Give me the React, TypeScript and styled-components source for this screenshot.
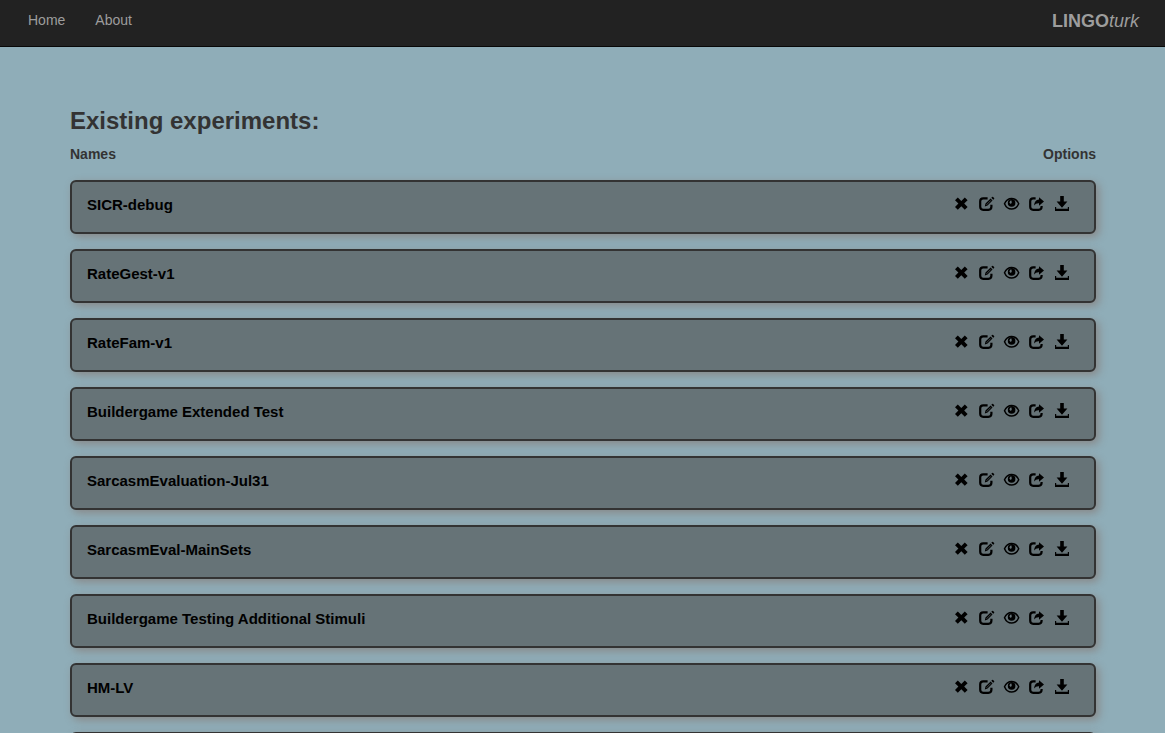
import React from "react";
import styled, { createGlobalStyle } from "styled-components";

const GlobalStyle = createGlobalStyle`
  * { box-sizing: border-box; }
  body {
    margin: 0;
    background: #8fadb8;
    color: #333;
    font-family: "Liberation Sans", Arial, sans-serif;
    font-size: 14px;
    line-height: 20px;
  }
`;

const Navbar = styled.nav`
  display: flex;
  justify-content: space-between;
  align-items: flex-start;
  height: 47px;
  padding: 10px 26px 0 28px;
  background: #222;
  border-bottom: 1px solid #080808;
`;

const NavLinks = styled.div`
  display: flex;
  gap: 30px;
`;

const NavLink = styled.a`
  color: #9d9d9d;
  text-decoration: none;
`;

const Brand = styled(NavLink)`
  font-size: 18px;
  line-height: 22px;
`;

const Main = styled.main`
  padding: 60px 69px 0 70px;
`;

const Title = styled.h1`
  margin: 0 0 9px;
  font-size: 24px;
  line-height: 28px;
`;

const ColumnHeads = styled.div`
  display: flex;
  justify-content: space-between;
  margin-bottom: 16px;
  font-weight: bold;
`;

const List = styled.ul`
  display: flex;
  flex-direction: column;
  gap: 15px;
  margin: 0;
  padding: 0;
  list-style: none;
`;

const Card = styled.li`
  display: flex;
  justify-content: space-between;
  align-items: flex-start;
  height: 54px;
  padding: 13px 24px 0 15px;
  background: #667377;
  border: 2px solid #333;
  border-radius: 6px;
  box-shadow: 3px 3px 8px #888;
`;

const Name = styled.span`
  color: #000;
  font-size: 15px;
  font-weight: bold;
`;

const Actions = styled.div`
  display: flex;
  gap: 9px;
  padding-top: 1px;
`;

const IconButton = styled.button`
  display: block;
  padding: 0;
  border: 0;
  background: none;
  color: #000;
  cursor: pointer;

  svg {
    display: block;
    width: 16px;
    height: 16px;
  }
`;

const boxOutline =
  "M8.6 2.3H4.2Q1.2 2.3 1.2 5.3V10.8Q1.2 13.8 4.2 13.8H9.4Q12.4 13.8 12.4 10.8V8.8";

const actions = [
  {
    label: "Delete",
    icon: (
      <path
        d="M1 4.3 3.8 1.5 7.3 5 10.8 1.5 13.6 4.3 10.2 7.6 13.6 10.9 10.8 13.7 7.3 10.2 3.8 13.7 1 10.9 4.4 7.6Z"
        fill="currentColor"
      />
    ),
  },
  {
    label: "Edit",
    icon: (
      <>
        <path d={boxOutline} fill="none" stroke="currentColor" strokeWidth="2.2" />
        <path
          d="M5.8 10.4 6.5 7.4 11.6 2.5 13.5 4.4 8.5 9.5ZM12.3 1.8 13.1 1Q13.6.6 14.1 1L15.1 2Q15.5 2.5 15.1 3L14.2 3.8Z"
          fill="currentColor"
        />
        <path d="M7.5 8.8 11.8 4.4" stroke="#667377" strokeWidth=".6" />
      </>
    ),
  },
  {
    label: "View",
    icon: (
      <>
        <path
          d="M.5 7.7C2 4.2 4.7 2.4 7.6 2.4S13.2 4.2 14.7 7.7C13.2 11.2 10.5 13 7.6 13S2 11.2.5 7.7Z"
          fill="none"
          stroke="currentColor"
          strokeWidth="1.5"
        />
        <circle cx="7.6" cy="6.9" r="3.8" fill="currentColor" />
        <path d="M7.2 4.2Q5.8 4.6 5.4 6.6L6.7 7.9Q7.6 7.5 7.8 6.3Z" fill="#667377" />
      </>
    ),
  },
  {
    label: "Share",
    icon: (
      <>
        <path
          d="M6.6 2.3H4.2Q1.2 2.3 1.2 5.3V10.8Q1.2 13.8 4.2 13.8H9.6Q12.6 13.8 12.6 10.8V10"
          fill="none"
          stroke="currentColor"
          strokeWidth="2.2"
        />
        <path
          d="M10 1.2 15 5.4 10 9.7V7.3Q6.9 7 5.1 9.6 5.4 4 10 3.5Z"
          fill="currentColor"
        />
      </>
    ),
  },
  {
    label: "Download",
    icon: (
      <path
        d="M6.2 0H9.8V5.6H13.4L8 11.8 2.6 5.6H6.2ZM1 11H2.2V12.8H13.8V11H15V15H1Z"
        fill="currentColor"
      />
    ),
  },
];

const experiments = [
  "SICR-debug",
  "RateGest-v1",
  "RateFam-v1",
  "Buildergame Extended Test",
  "SarcasmEvaluation-Jul31",
  "SarcasmEval-MainSets",
  "Buildergame Testing Additional Stimuli",
  "HM-LV",
];

function ExperimentCard({ name }: { name: string }) {
  return (
    <Card>
      <Name>{name}</Name>
      <Actions>
        {actions.map(({ label, icon }) => (
          <IconButton key={label} type="button" aria-label={`${label} ${name}`}>
            <svg viewBox="0 0 16 16" overflow="visible" aria-hidden="true">
              {icon}
            </svg>
          </IconButton>
        ))}
      </Actions>
    </Card>
  );
}

export default function App() {
  return (
    <>
      <GlobalStyle />
      <Navbar>
        <NavLinks>
          <NavLink href="#home">Home</NavLink>
          <NavLink href="#about">About</NavLink>
        </NavLinks>
        <Brand href="#home">
          <b>LINGO</b>
          <i>turk</i>
        </Brand>
      </Navbar>
      <Main>
        <Title>Existing experiments:</Title>
        <ColumnHeads>
          <span>Names</span>
          <span>Options</span>
        </ColumnHeads>
        <List>
          {experiments.map((name) => (
            <ExperimentCard key={name} name={name} />
          ))}
          <Card />
        </List>
      </Main>
    </>
  );
}
